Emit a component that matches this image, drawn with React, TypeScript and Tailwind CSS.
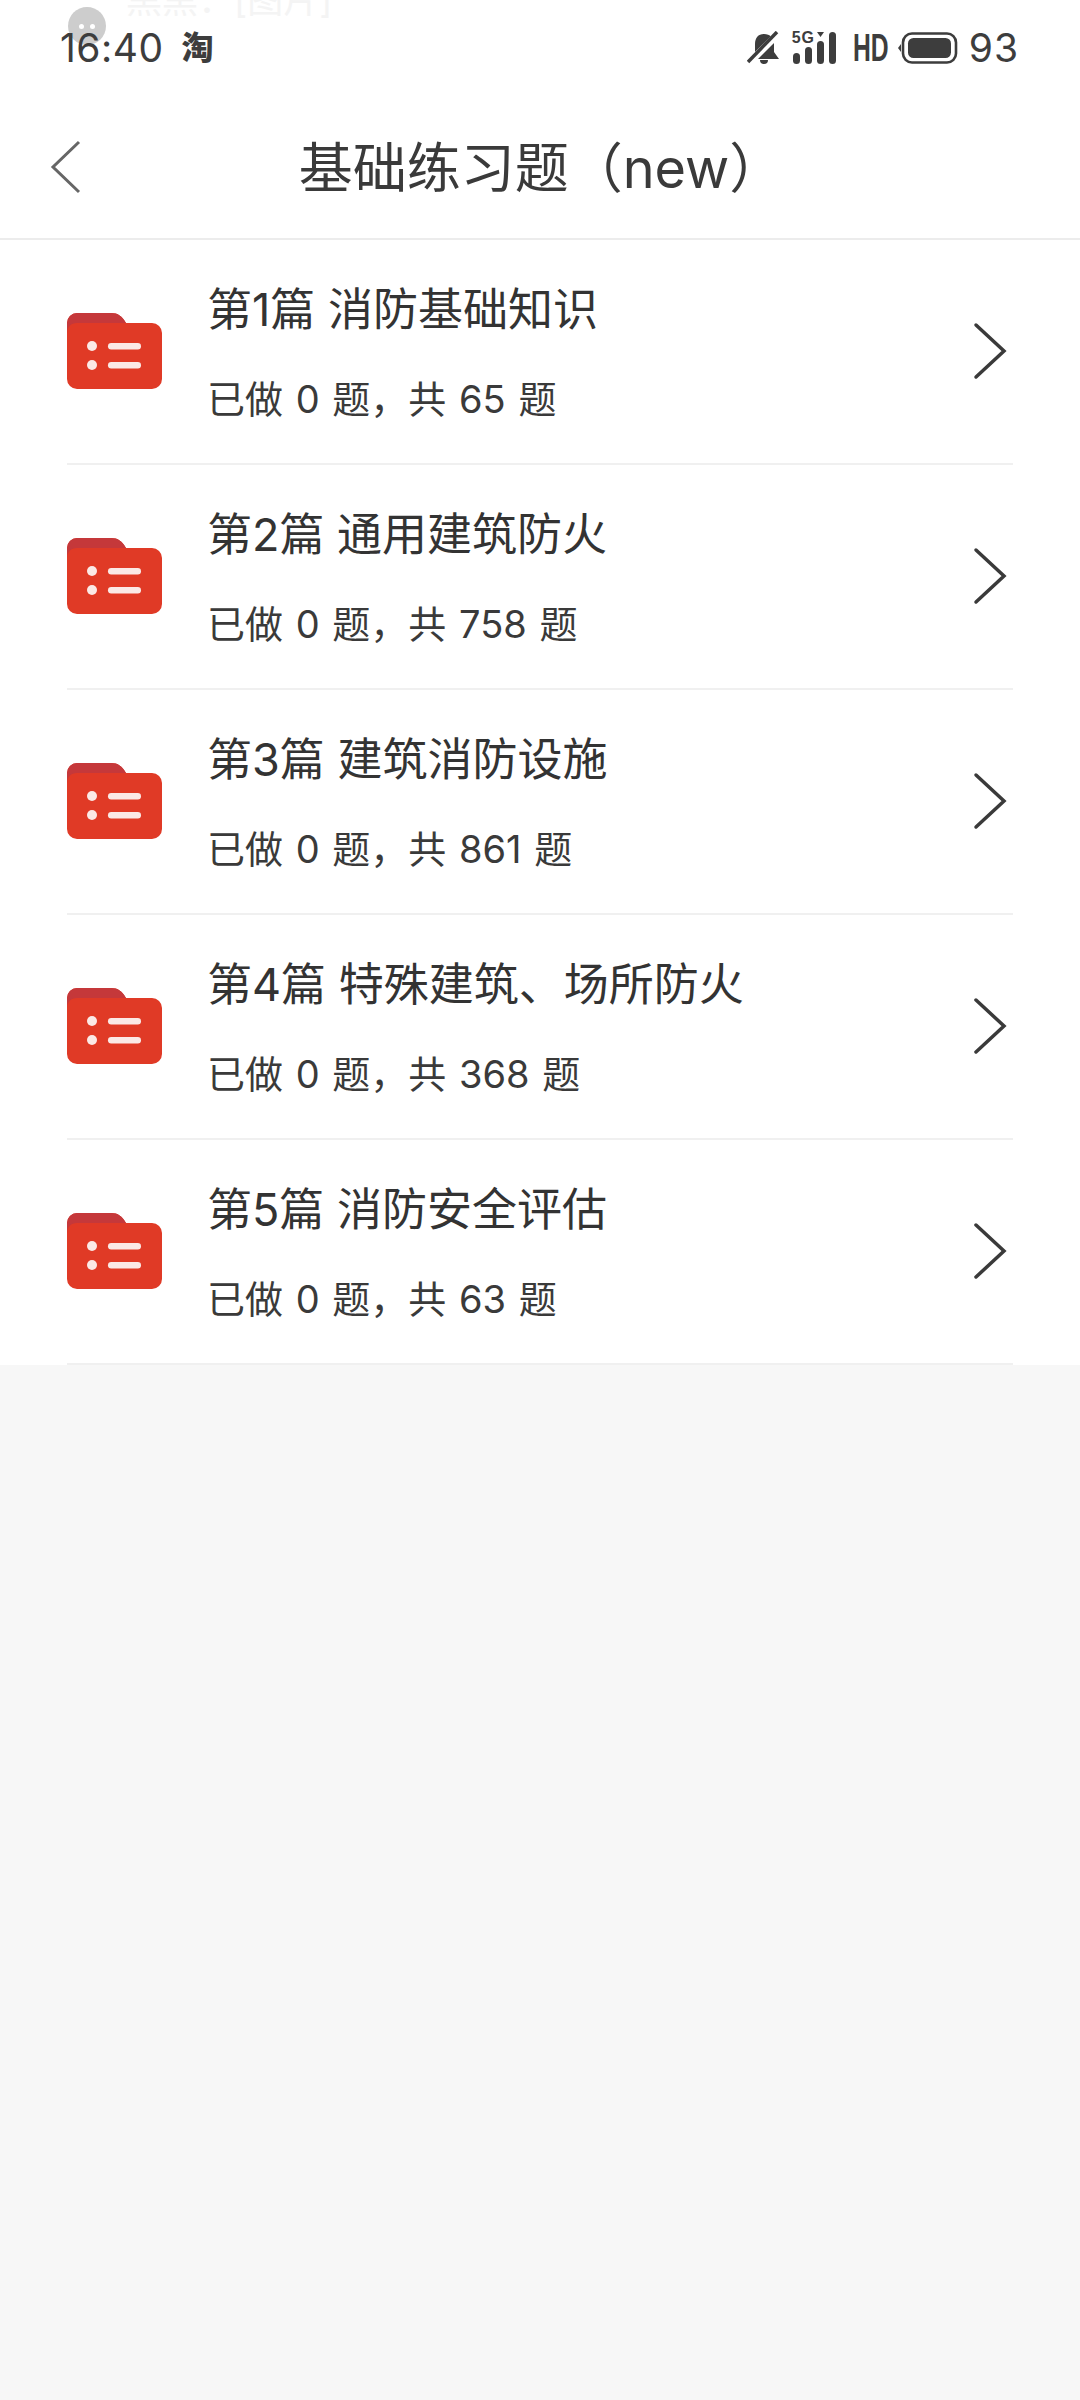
const sections = [
  { title: '第1篇 消防基础知识', total: 65 },
  { title: '第2篇 通用建筑防火', total: 758 },
  { title: '第3篇 建筑消防设施', total: 861 },
  { title: '第4篇 特殊建筑、场所防火', total: 368 },
  { title: '第5篇 消防安全评估', total: 63 },
];

function FolderIcon() {
  return (
    <svg width="95" height="76" viewBox="0 0 95 76" className="shrink-0">
      <path d="M0 10a10 10 0 0 1 10-10h34c7 0 11 3 15 10h26a10 10 0 0 1 10 10v46a10 10 0 0 1-10 10H10A10 10 0 0 1 0 66z" fill="#e03a26" />
      <path d="M0 10a10 10 0 0 1 10-10h34c7 0 11 3 15 10H10C4 10 0 14 0 20z" fill="#c5383a" />
      <circle cx="25" cy="33" r="5" fill="#fbe9e6" />
      <circle cx="25" cy="52" r="5" fill="#fbe9e6" />
      <rect x="41" y="30" width="33" height="6.5" rx="3.2" fill="#fbe9e6" />
      <rect x="41" y="49" width="33" height="6.5" rx="3.2" fill="#fbe9e6" />
    </svg>
  );
}

function StatusIcons() {
  return (
    <div className="flex items-center text-[#3d3d3d]">
      <svg width="34" height="34" viewBox="0 0 34 34" className="mr-[12px]">
        <path d="M17 3c6 0 10 4 10 10v8l5 7H4l4-6v-9C8 7 11 3 17 3z" fill="#3d3d3d" />
        <path d="M13 29h8a4 4 0 0 1-8 0z" fill="#3d3d3d" />
        <path d="M2 32 32 2" stroke="#ffffff" strokeWidth="7" />
        <path d="M1 31 30 1" stroke="#3d3d3d" strokeWidth="3.5" />
      </svg>
      <div className="relative h-[32px] w-[44px] mr-[16px]">
        <span className="absolute left-[-1px] top-[-2px] text-[16px] leading-[16px] font-bold tracking-[1px] font-['Liberation_Sans','sans-serif']">5G</span>
        <svg width="44" height="32" viewBox="0 0 44 32" className="absolute left-0 top-0">
          <rect x="0" y="21" width="7" height="11" rx="3.5" fill="#3d3d3d" />
          <rect x="12" y="15" width="7" height="17" rx="3.5" fill="#3d3d3d" />
          <rect x="24" y="9" width="7" height="23" rx="3.5" fill="#3d3d3d" />
          <path d="M24 0h7l-3.5 5z" fill="#3d3d3d" />
          <rect x="36" y="0" width="7" height="32" rx="3.5" fill="#3d3d3d" />
        </svg>
      </div>
      <span className="w-[36px] text-[38px] leading-[32px] font-bold font-['Liberation_Sans','sans-serif'] origin-left scale-x-[.65] mr-[9px]">HD</span>
      <svg width="60" height="32" viewBox="0 0 60 32" className="mr-[11px]">
        <path d="M0 16l3-4v8z" fill="#3d3d3d" />
        <rect x="5" y="1.5" width="53" height="29" rx="9" fill="none" stroke="#3d3d3d" strokeWidth="2.6" />
        <rect x="10" y="6" width="43" height="20" rx="5.5" fill="#3d3d3d" />
      </svg>
      <span className="text-[39px] leading-[48px] tracking-[1px]">93</span>
    </div>
  );
}

export default function App() {
  return (
    <div className="relative h-[2400px] w-[1080px] overflow-hidden bg-[#f7f7f7] font-['Inter','Noto_Sans_CJK_SC','sans-serif'] text-[#333333]">
      {/* notification sliding away behind the status bar */}
      <div className="absolute left-[68px] top-[7px] flex h-[38px] w-[38px] items-center justify-center gap-[6px] rounded-full bg-[#cdcdcd] z-10">
        <span className="h-[5px] w-[5px] rounded-full bg-white" />
        <span className="h-[5px] w-[5px] rounded-full bg-white" />
      </div>
      <div className="absolute left-[126px] top-[-22px] text-[36px] leading-[44px] text-[#f4f4f4] z-10">黑黑：[图片]</div>

      <div className="bg-white">
        <div className="relative z-20 flex h-[76px] items-start justify-between pl-[60px] pr-[61px] pt-[24px]">
          <div className="flex items-center">
            <span className="text-[39px] leading-[48px] tracking-[.5px] text-[#3d3d3d]">16:40</span>
            <span className="ml-[18px] text-[32px] leading-[48px] font-black text-[#3d3d3d]">淘</span>
          </div>
          <StatusIcons />
        </div>

        <div className="relative flex h-[164px] items-center justify-center border-b-2 border-[#ececec]">
          <svg width="32" height="54" viewBox="0 0 32 54" className="absolute left-[50px] top-[64px]">
            <path d="M29 2 3 27l26 25" fill="none" stroke="#666666" strokeWidth="3" />
          </svg>
          <h1 className="ml-[2px] pt-[24px] text-[54px] leading-[64px] font-normal text-[#3a3a3a]">基础练习题（new）</h1>
        </div>

        <ul className="px-[67px]">
          {sections.map((s) => (
            <li key={s.title} className="flex h-[225px] items-center border-b-2 border-[#f0f0f0] pb-[2px]">
              <FolderIcon />
              <div className="ml-[45px] flex-1">
                <div className="pt-[2px] text-[45px] leading-[60px] text-[#333333]">{s.title}</div>
                <div className="mt-[32px] pt-[2px] text-[38px] leading-[50px] [word-spacing:2px] text-[#3a3a3a]">已做 0 题，共 {s.total} 题</div>
              </div>
              <svg width="34" height="58" viewBox="0 0 34 58" className="mr-[6px]">
                <path d="M3 3l28 26L3 55" fill="none" stroke="#3a3a3a" strokeWidth="3.5" strokeLinecap="round" />
              </svg>
            </li>
          ))}
        </ul>
      </div>
    </div>
  );
}
